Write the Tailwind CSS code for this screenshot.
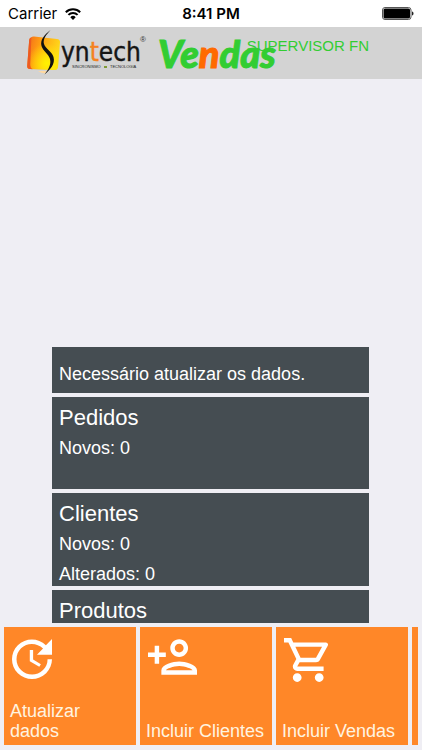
<!DOCTYPE html>
<html lang="pt-BR">
<head>
<meta charset="utf-8">
<meta name="viewport" content="width=device-width, initial-scale=1">
<title>Syntech Vendas</title>
<script src="https://cdn.jsdelivr.net/npm/@tailwindcss/browser@4"></script>
</head>
<body class="flex h-screen flex-col overflow-hidden bg-[#efeef4] font-['Liberation_Sans',Arial,sans-serif]">

<!-- Status bar -->
<div class="grid h-[27px] shrink-0 grid-cols-3 items-center bg-white px-2 font-['Inter',sans-serif] text-[15px] leading-5 text-black">
  <div class="flex items-center gap-2">
    <span>Carrier</span>
    <svg class="h-3 w-4" viewBox="0 0 16 12" fill="none" stroke="#000" stroke-width="2" aria-hidden="true">
      <path d="M.8 4.2a10.2 10.2 0 0 1 14.4 0M3.4 6.9a6.5 6.5 0 0 1 9.2 0"/>
      <path d="M8 12 5.3 9.2a3.8 3.8 0 0 1 5.4 0z" fill="#000" stroke="none"/>
    </svg>
  </div>
  <span class="text-center font-semibold">8:41 PM</span>
  <svg class="h-[13px] w-8 justify-self-end" viewBox="0 0 32 13" aria-hidden="true">
    <rect x=".5" y=".5" width="28.500" height="12" rx="2.500" fill="#fff" stroke="#555"/>
    <rect x="1.500" y="1.500" width="26.500" height="10" rx="1.500" fill="#000"/>
    <path d="M30 4.500c2 .6 2 3.400 0 4z" fill="#222"/>
  </svg>
</div>

<!-- Brand header -->
<header class="relative flex h-[52px] shrink-0 items-center bg-[#d3d3d3] pl-[26px]">
  <svg class="h-12 w-[126px] shrink-0" viewBox="0 0 126 48" role="img" aria-label="Syntech">
    <defs>
      <linearGradient id="tile" x1="0" y1="0" x2="1" y2=".3">
        <stop offset="0" stop-color="#f26a1b"/>
        <stop offset=".4" stop-color="#ff9d12"/>
        <stop offset="1" stop-color="#ffd91a"/>
      </linearGradient>
      <radialGradient id="glow" cx=".6" cy=".8" r=".6">
        <stop offset="0" stop-color="#fff200"/>
        <stop offset="1" stop-color="#fff200" stop-opacity="0"/>
      </radialGradient>
    </defs>
    <path d="M5 8.500Q6 7.500 8 7.600L31 10q3 .4 3 3L32 38q-.4 3-3 3L4 40q-3-.2-2.800-3L3.200 11q.2-1.800 1.800-2.500z" fill="url(#tile)"/>
    <path d="M5 8.500Q6 7.500 8 7.600L31 10q3 .4 3 3L32 38q-.4 3-3 3L4 40q-3-.2-2.800-3L3.200 11q.2-1.800 1.800-2.500z" fill="url(#glow)"/>
    <path d="M3.200 11q.2-2 2.200-2.800L4.200 36q0 3 2.600 4.200L4 40q-3-.2-2.800-3z" fill="#ed5a20"/>
    <path d="M12 42h9l-2 2.500q-4-.2-7-2.500z" fill="#ffd9a0"/>
    <path d="M24.500 1C18 6 14 11 15.500 17c1.500 5 7 8 8.500 13 1.500 6-2 11-5.500 15.500C24 41 29.500 35 27.500 28c-1.600-5.500-8-8-9.500-13-1.400-5 2.500-9.500 6.500-14z" fill="#111"/>
    <text x="35" y="32" font-family="'DejaVu Sans Condensed','Liberation Sans',sans-serif" font-size="26" fill="#151515" stroke="#151515" stroke-width=".4">yn<tspan fill="#f58220" stroke="#f58220">t</tspan>ech</text>
    <text x="46" y="39" font-family="'Liberation Sans',sans-serif" font-size="4" fill="#222">SINCRONISMO</text>
    <rect x="78" y="37" width="3" height="2" fill="#7e9a35"/>
    <text x="84" y="39" font-family="'Liberation Sans',sans-serif" font-size="4" fill="#222">TECNOLOGIA</text>
    <text x="114" y="13" font-family="'Liberation Sans',sans-serif" font-size="8" fill="#333">®</text>
  </svg>
  <p class="absolute top-[9px] right-[53px] text-[15px] leading-5 text-[#32cd32]">SUPERVISOR FN</p>
  <span class="relative ml-1.5 font-['Lato',sans-serif] text-[38px] leading-[52px] font-black text-[#32cd32] italic [-webkit-text-stroke:1px_currentColor]">Ve<span class="text-[#ff6a00]">n</span>das</span>
</header>

<!-- Summary cards -->
<main class="flex min-h-0 flex-1 flex-col justify-end pr-[53px] pl-[52px]">
  <div class="flex h-[276px] flex-col gap-1 overflow-hidden text-lg leading-[30px] text-white">
    <section class="h-[46px] shrink-0 bg-[#454d52] px-[7px] pt-3">
      <p>Necessário atualizar os dados.</p>
    </section>
    <section class="h-[92px] shrink-0 bg-[#454d52] px-[7px] pt-1.5">
      <h2 class="text-[22px]">Pedidos</h2>
      <p>Novos: 0</p>
    </section>
    <section class="h-[93px] shrink-0 bg-[#454d52] px-[7px] pt-1.5">
      <h2 class="text-[22px]">Clientes</h2>
      <p>Novos: 0</p>
      <p>Alterados: 0</p>
    </section>
    <section class="h-[92px] shrink-0 bg-[#454d52] px-[7px] pt-1.5">
      <h2 class="text-[22px]">Produtos</h2>
    </section>
  </div>
</main>

<!-- Action tiles -->
<nav class="shrink-0 px-1 pt-1 pb-[5px]" aria-label="Ações">
  <div class="flex gap-1 overflow-hidden text-lg leading-5 text-[#fff4e0]">
    <button type="button" class="flex h-[118px] w-[132px] shrink-0 flex-col items-start justify-between bg-[#ff8728] px-1.5 pt-3 pb-1 text-left">
      <svg class="ml-0.5 size-10" viewBox="3 3 18 18" fill="#fff" aria-hidden="true"><path d="M21 10.120h-6.780l2.740-2.820c-2.730-2.700-7.150-2.800-9.880-.1-2.730 2.710-2.730 7.080 0 9.790s7.150 2.710 9.880 0C18.320 15.650 19 14.080 19 12.100h2c0 1.980-.88 4.550-2.640 6.290-3.510 3.480-9.210 3.480-12.720 0-3.500-3.470-3.530-9.110-.02-12.580s9.140-3.470 12.650 0L21 3v7.120zM12.500 8v4.250l3.500 2.080-.72 1.210L11 13V8h1.500z"/></svg>
      <span>Atualizar dados</span>
    </button>
    <button type="button" class="flex h-[118px] w-[132px] shrink-0 flex-col items-start justify-between bg-[#ff8728] px-1.5 pt-3 pb-1 text-left">
      <svg class="ml-0.5 h-9 w-[49px]" viewBox="1 4 22 16" fill="#fff" aria-hidden="true"><path d="M15 12c2.210 0 4-1.790 4-4s-1.790-4-4-4-4 1.790-4 4 1.790 4 4 4zm0-6c1.100 0 2 .9 2 2s-.9 2-2 2-2-.9-2-2 .9-2 2-2zm0 8c-2.670 0-8 1.340-8 4v2h16v-2c0-2.660-5.330-4-8-4zm-6 4c.22-.72 3.310-2 6-2 2.700 0 5.800 1.290 6 2H9zm-3-3v-3h3v-2H6V7H4v3H1v2h3v3z"/></svg>
      <span class="whitespace-nowrap">Incluir Clientes</span>
    </button>
    <button type="button" class="flex h-[118px] w-[132px] shrink-0 flex-col items-start justify-between bg-[#ff8728] px-1.5 pt-[11px] pb-1 text-left">
      <svg class="ml-0.5 size-11" viewBox="1 2 20 20" fill="#fff" aria-hidden="true"><path d="M15.550 13c.75 0 1.410-.41 1.750-1.030l3.580-6.490c.37-.66-.11-1.480-.87-1.480H5.210l-.94-2H1v2h2l3.600 7.590-1.350 2.440C4.520 15.370 5.480 17 7 17h12v-2H7l1.100-2h7.450zM6.160 6h12.150l-2.760 5H8.530L6.160 6zM7 18c-1.100 0-1.990.9-1.990 2S5.900 22 7 22s2-.9 2-2-.9-2-2-2zm10 0c-1.100 0-1.990.9-1.990 2s.89 2 1.990 2 2-.9 2-2-.9-2-2-2z"/></svg>
      <span class="whitespace-nowrap">Incluir Vendas</span>
    </button>
    <button type="button" class="h-[118px] w-[132px] shrink-0 bg-[#ff8728]" aria-label="Mais"></button>
  </div>
</nav>
</body>
</html>
